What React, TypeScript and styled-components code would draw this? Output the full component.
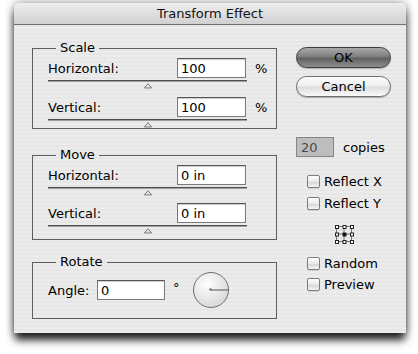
import React from "react";
import styled, { createGlobalStyle } from "styled-components";

const Global = createGlobalStyle`
  html, body {
    margin: 0;
    background: #fff;
    font-family: "DejaVu Sans", "Liberation Sans", sans-serif;
    font-size: 12px;
    color: #000;
  }
`;

const Page = styled.div`
  padding: 3px 0 21px 14px;
`;

const Window = styled.div`
  width: 392px;
  height: 330px;
  border-radius: 5px 5px 0 0;
  background: repeating-linear-gradient(
    to bottom,
    #ececec 0px,
    #ececec 2px,
    #e6e6e6 2px,
    #e6e6e6 4px
  );
  box-shadow: 0 8px 8px -1px rgba(0, 0, 0, 0.85), 0 0 10px rgba(0, 0, 0, 0.45);
  display: flex;
  flex-direction: column;
  overflow: hidden;
`;

const TitleBar = styled.div`
  height: 21px;
  border-bottom: 1px solid #6f6f6f;
  background: linear-gradient(to bottom, #eeeeee, #d0d0d0);
  display: flex;
  align-items: center;
  justify-content: center;
  font-size: 13px;
  color: #111;
`;

const Body = styled.div`
  display: flex;
  gap: 19px;
  padding: 16px 15px 0 18px;
`;

const LeftCol = styled.div`
  width: 245px;
  display: flex;
  flex-direction: column;
`;

const Group = styled.fieldset<{ $top: number; $bottom: number }>`
  margin: ${(p) => p.$top}px 0 0 0;
  padding: 3px 0 ${(p) => p.$bottom}px 15px;
  border: 1px solid #5e5e5e;
  min-width: 0;

  legend {
    margin-left: 8px;
    padding: 0 4px;
    font-size: 13px;
    line-height: 14px;
  }
`;

const Row = styled.div`
  display: flex;
  align-items: center;
  height: 20px;
`;

const Label = styled.span`
  flex: 1;
  font-size: 13px;
`;

const Field = styled.input<{ $w: number }>`
  width: ${(p) => p.$w}px;
  height: 20px;
  box-sizing: border-box;
  border: 1px solid #7a7a7a;
  border-top-color: #555;
  box-shadow: inset 0 1px 1px rgba(0, 0, 0, 0.2);
  background: #fff;
  padding: 1px 3px 0;
  font-family: inherit;
  font-size: 13px;
  color: #000;
  outline: none;
`;

const Unit = styled.span`
  width: 30px;
  padding-left: 9px;
  box-sizing: border-box;
  font-size: 13px;
`;

const Slider = styled.div<{ $after: number }>`
  width: 199px;
  height: 9px;
  margin-top: 2px;
  margin-bottom: ${(p) => p.$after}px;
  display: flex;
  flex-direction: column;
  align-items: center;
`;

const Track = styled.div`
  align-self: stretch;
  height: 0;
  border-top: 1px solid #4e4e4e;
  border-bottom: 1px solid #a0a0a0;
`;

const Thumb = () => (
  <svg width="10" height="7" viewBox="0 0 10 7" style={{ marginTop: 1 }}>
    <path d="M5 0.8 L9.2 5.8 L0.8 5.8 Z" fill="#e4e4e4" stroke="#6a6a6a" strokeWidth="1" />
  </svg>
);

const AngleRow = styled.div`
  display: flex;
  align-items: center;
  height: 36px;
`;

const AngleLabel = styled.span`
  font-size: 13px;
  width: 49px;
`;

const Degree = styled.span`
  font-size: 13px;
  margin: -6px 0 0 8px;
  width: 19px;
`;

const RightCol = styled.div`
  width: 95px;
  display: flex;
  flex-direction: column;
  padding-top: 6px;
`;

const Button = styled.button<{ $primary?: boolean }>`
  height: 21px;
  border-radius: 11px;
  border: 1px solid ${(p) => (p.$primary ? "#3c3c3c" : "#6c6c6c")};
  background: ${(p) =>
    p.$primary
      ? "linear-gradient(to bottom, #a8a8a8 0%, #7c7c7c 48%, #5e5e5e 52%, #8e8e8e 100%)"
      : "linear-gradient(to bottom, #fdfdfd 0%, #eeeeee 48%, #dcdcdc 52%, #fafafa 100%)"};
  box-shadow: 0 1px 1px rgba(0, 0, 0, 0.25);
  font-family: inherit;
  font-size: 13px;
  color: #000;
  padding: 0;
  margin-bottom: 8px;
`;

const CopiesRow = styled.div`
  display: flex;
  align-items: center;
  margin-top: 32px;
  gap: 9px;
  font-size: 13px;
`;

const Copies = styled.div`
  width: 38px;
  height: 20px;
  box-sizing: border-box;
  border: 1px solid #868686;
  background: #bdbdbd;
  color: #4a4a4a;
  font-size: 13px;
  padding: 2px 0 0 4px;
`;

const Checks = styled.div`
  display: flex;
  flex-direction: column;
  padding-left: 11px;
`;

const Check = styled.label<{ $top: number }>`
  display: flex;
  align-items: center;
  gap: 4px;
  margin-top: ${(p) => p.$top}px;
  height: 14px;
  font-size: 13px;
`;

const Box = styled.span`
  width: 13px;
  height: 13px;
  box-sizing: border-box;
  border: 1px solid #7c7c7c;
  border-radius: 2px;
  background: linear-gradient(to bottom, #ffffff, #e9e9e9 50%, #d6d6d6 55%, #f5f5f5);
  box-shadow: 0 1px 0 rgba(0, 0, 0, 0.1);
`;

const RefPoint = styled.div`
  display: flex;
  justify-content: center;
  margin-top: 14px;
  margin-left: -11px;
`;

const RefIcon = () => {
  const pos = [1, 8.5, 16];
  return (
    <svg width="20" height="20" viewBox="0 0 20 20">
      <g stroke="#222" strokeWidth="1" fill="none">
        <path d="M4 2.5 H16 M4 10 H16 M4 17.5 H16 M2.5 4 V16 M10 4 V16 M17.5 4 V16" stroke="#777" />
        {pos.map((y) =>
          pos.map((x) => (
            <rect
              key={`${x}-${y}`}
              x={x + 0.5}
              y={y + 0.5}
              width="3"
              height="3"
              fill={x === 8.5 && y === 8.5 ? "#000" : "#fff"}
            />
          ))
        )}
      </g>
    </svg>
  );
};

const Dial = () => (
  <svg width="38" height="38" viewBox="0 0 38 38">
    <defs>
      <radialGradient id="dialg" cx="0.4" cy="0.35" r="0.7">
        <stop offset="0" stopColor="#ffffff" />
        <stop offset="1" stopColor="#d6d6d6" />
      </radialGradient>
    </defs>
    <circle cx="19" cy="19" r="17.5" fill="url(#dialg)" stroke="#6e6e6e" strokeWidth="1" />
    <line x1="19" y1="19" x2="36" y2="19" stroke="#555" strokeWidth="1" />
    <rect x="17.5" y="17.5" width="2" height="2" fill="#555" />
  </svg>
);

const SliderRow = ({ label, value, unit, after }: { label: string; value: string; unit?: string; after: number }) => (
  <>
    <Row>
      <Label>{label}</Label>
      <Field $w={69} defaultValue={value} />
      <Unit>{unit}</Unit>
    </Row>
    <Slider $after={after}>
      <Track />
      <Thumb />
    </Slider>
  </>
);

export default function App() {
  return (
    <Page>
      <Global />
      <Window>
        <TitleBar>Transform Effect</TitleBar>
        <Body>
          <LeftCol>
            <Group $top={0} $bottom={0}>
              <legend>Scale</legend>
              <SliderRow label="Horizontal:" value="100" unit="%" after={8} />
              <SliderRow label="Vertical:" value="100" unit="%" after={0} />
            </Group>
            <Group $top={19} $bottom={5}>
              <legend>Move</legend>
              <SliderRow label="Horizontal:" value="0 in" after={7} />
              <SliderRow label="Vertical:" value="0 in" after={0} />
            </Group>
            <Group $top={15} $bottom={10}>
              <legend>Rotate</legend>
              <AngleRow>
                <AngleLabel>Angle:</AngleLabel>
                <Field $w={68} defaultValue="0" />
                <Degree>°</Degree>
                <Dial />
              </AngleRow>
            </Group>
          </LeftCol>
          <RightCol>
            <Button $primary>OK</Button>
            <Button>Cancel</Button>
            <CopiesRow>
              <Copies>20</Copies>
              <span>copies</span>
            </CopiesRow>
            <Checks>
              <Check $top={17}>
                <Box />
                Reflect X
              </Check>
              <Check $top={8}>
                <Box />
                Reflect Y
              </Check>
              <RefPoint>
                <RefIcon />
              </RefPoint>
              <Check $top={12}>
                <Box />
                Random
              </Check>
              <Check $top={7}>
                <Box />
                Preview
              </Check>
            </Checks>
          </RightCol>
        </Body>
      </Window>
    </Page>
  );
}
